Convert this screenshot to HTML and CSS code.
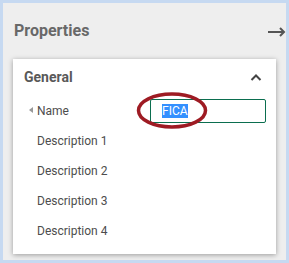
FILE: index.html
```html
<!DOCTYPE html>
<html lang="en">
<head>
    <meta charset="UTF-8">
    <meta name="viewport" content="width=device-width, initial-scale=1.0">
    <title>Properties</title>
    <link rel="stylesheet" href="styles.css">
</head>
<body>
    <div class="panel">
        <div class="panel-head">
            <h1>Properties</h1>
            <svg class="close-arrow" width="18" height="10" viewBox="0 0 18 10">
                <path d="M0 5 H16 M12 1 L16 5 L12 9" fill="none" stroke="#555" stroke-width="2"/>
            </svg>
        </div>

        <div class="card">
            <div class="card-head">
                <h2>General</h2>
                <svg class="chevron" width="12" height="8" viewBox="0 0 12 8">
                    <path d="M1.5 7 L6 2.5 L10.5 7" fill="none" stroke="#444" stroke-width="2"/>
                </svg>
            </div>

            <div class="row row-active">
                <span class="marker"></span>
                <label for="name">Name</label>
                <div class="field">
                    <input type="text" id="name" value="FICA">
                    <svg class="ring" width="74" height="39" viewBox="0 0 74 39">
                        <ellipse cx="37" cy="19.5" rx="33.5" ry="16.5" fill="none" stroke="#9e1b23" stroke-width="3.5"/>
                    </svg>
                </div>
            </div>
            <div class="row"><label>Description 1</label></div>
            <div class="row"><label>Description 2</label></div>
            <div class="row"><label>Description 3</label></div>
            <div class="row"><label>Description 4</label></div>
        </div>
    </div>

    <script>
        // keep the value selected, as in the editor
        const nameInput = document.getElementById('name');
        nameInput.focus();
        nameInput.select();
    </script>
</body>
</html>
```

FILE: styles.css
```css
body {
    margin: 0;
    padding: 3px;
    background-color: #c6d9f1;
    font-family: Roboto, "Liberation Sans", sans-serif;
}
.panel {
    width: 283px;
    height: 257px;
    background-color: #eeeeee;
    overflow: hidden;
}
.panel-head {
    display: flex;
    align-items: center;
    justify-content: space-between;
    height: 56px;
    padding-left: 11px;
}
.panel-head h1 {
    margin: 0 0 1px;
    font-size: 16px;
    font-weight: bold;
    color: #686868;
}
.close-arrow {
    display: block;
    margin-top: 2px;
}
.card {
    margin-left: 10px;
    width: 263px;
    height: 195px;
    background-color: white;
    box-shadow: 0 1px 5px rgba(0, 0, 0, 0.35);
}
.card-head {
    display: flex;
    align-items: center;
    justify-content: space-between;
    height: 36px;
    padding: 0 14px 0 11px;
}
.card-head h2 {
    margin: 0;
    font-size: 14px;
    font-weight: bold;
    color: #595959;
}
.chevron {
    display: block;
}
.row {
    display: flex;
    align-items: center;
    height: 30px;
    padding-left: 24px;
    font-size: 12px;
    color: #4d4d4d;
}
.row-active {
    position: relative;
    height: 31px;
}
.marker {
    position: absolute;
    left: 16px;
    top: 12px;
    border-top: 3.5px solid transparent;
    border-bottom: 3.5px solid transparent;
    border-right: 4px solid #999;
}
.field {
    position: relative;
    margin-left: auto;
    margin-right: 10px;
}
.field input {
    display: block;
    box-sizing: border-box;
    width: 116px;
    height: 24px;
    margin: 0;
    padding: 0 0 0 11px;
    border: 1px solid #0b6e4f;
    border-radius: 2px;
    font-family: Roboto, "Liberation Sans", sans-serif;
    font-size: 12px;
    color: #333;
    outline: none;
}
.field input::selection {
    background-color: #3390ff;
    color: white;
}
.ring {
    position: absolute;
    left: -15px;
    top: -8px;
    pointer-events: none;
}
```
